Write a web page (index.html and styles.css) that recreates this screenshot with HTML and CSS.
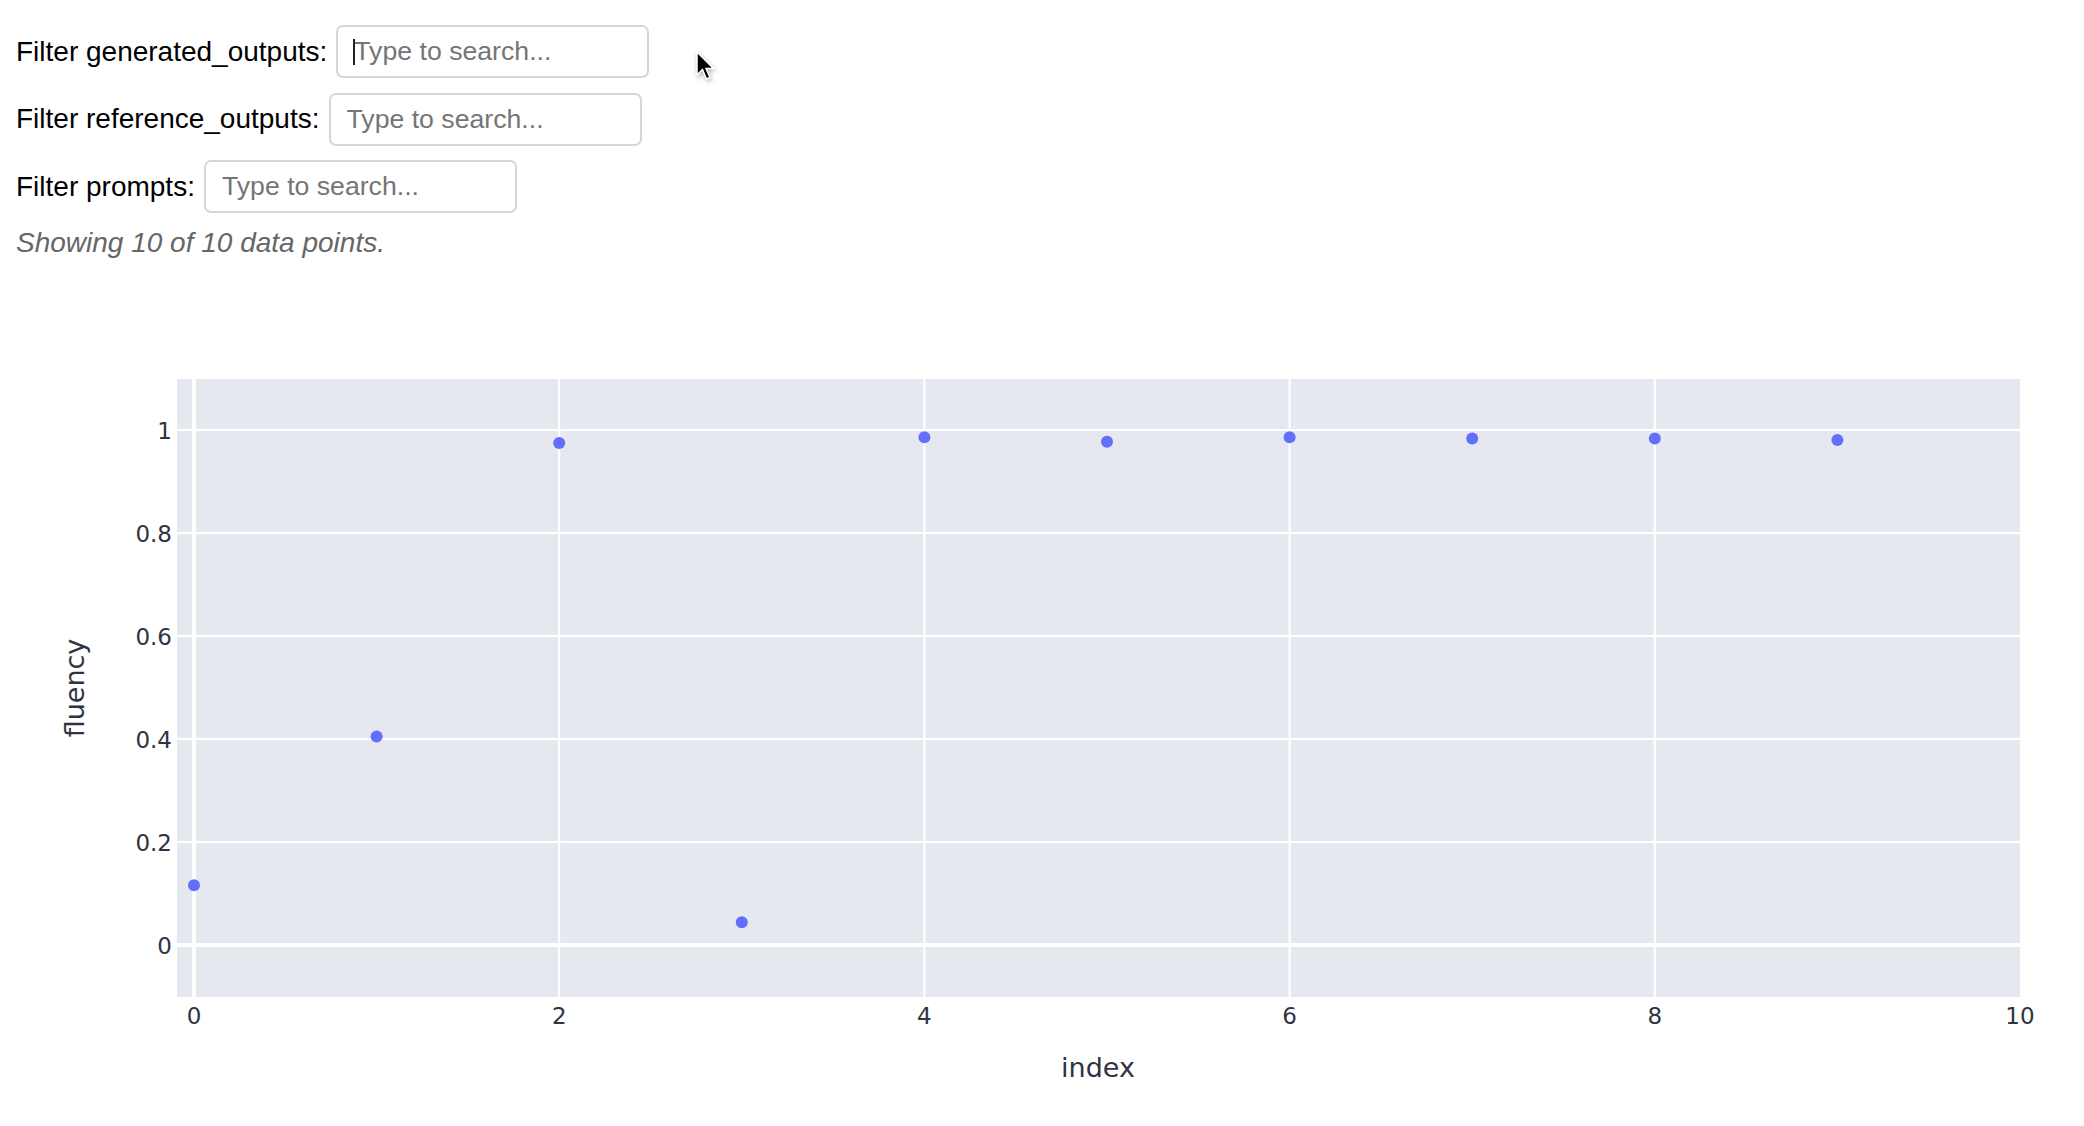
FILE: index.html
```html
<!DOCTYPE html>
<html lang="en">
<head>
    <meta charset="UTF-8">
    <meta name="viewport" content="width=device-width, initial-scale=1.0">
    <title>fluency by index</title>
    <link rel="stylesheet" href="styles.css">
</head>
<body>
    <div class="filters">
        <div class="filter-row">
            <label for="f-gen">Filter generated_outputs:</label>
            <span class="field">
                <input id="f-gen" type="text" placeholder="Type to search...">
                <span class="caret"></span>
            </span>
        </div>
        <div class="filter-row">
            <label for="f-ref">Filter reference_outputs:</label>
            <span class="field"><input id="f-ref" type="text" placeholder="Type to search..."></span>
        </div>
        <div class="filter-row">
            <label for="f-prompt">Filter prompts:</label>
            <span class="field"><input id="f-prompt" type="text" placeholder="Type to search..."></span>
        </div>
        <p class="status">Showing 10 of 10 data points.</p>
    </div>

    <div class="chart">
        <svg width="2084" height="800" viewBox="0 300 2084 800">
            <!-- plot area -->
            <rect class="plot-bg" x="177" y="379" width="1843" height="618"></rect>

            <!-- grid -->
            <g class="grid">
                <line x1="559.2" y1="379" x2="559.2" y2="997"></line>
                <line x1="924.4" y1="379" x2="924.4" y2="997"></line>
                <line x1="1289.6" y1="379" x2="1289.6" y2="997"></line>
                <line x1="1654.8" y1="379" x2="1654.8" y2="997"></line>
                <line x1="177" y1="842" x2="2020" y2="842"></line>
                <line x1="177" y1="739" x2="2020" y2="739"></line>
                <line x1="177" y1="636" x2="2020" y2="636"></line>
                <line x1="177" y1="533" x2="2020" y2="533"></line>
                <line x1="177" y1="430" x2="2020" y2="430"></line>
            </g>
            <g class="zero">
                <line x1="194" y1="379" x2="194" y2="997"></line>
                <line x1="177" y1="945" x2="2020" y2="945"></line>
            </g>

            <!-- points -->
            <g class="points">
                <circle cx="194" cy="885.3" r="6"></circle>
                <circle cx="376.6" cy="736.4" r="6"></circle>
                <circle cx="559.2" cy="442.9" r="6"></circle>
                <circle cx="741.8" cy="922.3" r="6"></circle>
                <circle cx="924.4" cy="437.2" r="6"></circle>
                <circle cx="1107" cy="441.8" r="6"></circle>
                <circle cx="1289.6" cy="437.2" r="6"></circle>
                <circle cx="1472.2" cy="438.5" r="6"></circle>
                <circle cx="1654.8" cy="438.5" r="6"></circle>
                <circle cx="1837.4" cy="440" r="6"></circle>
            </g>

            <!-- y ticks -->
            <g class="ytick">
                <text x="172" y="439">1</text>
                <text x="172" y="542">0.8</text>
                <text x="172" y="645">0.6</text>
                <text x="172" y="748">0.4</text>
                <text x="172" y="851">0.2</text>
                <text x="172" y="954">0</text>
            </g>

            <!-- x ticks -->
            <g class="xtick">
                <text x="194" y="1024">0</text>
                <text x="559.2" y="1024">2</text>
                <text x="924.4" y="1024">4</text>
                <text x="1289.6" y="1024">6</text>
                <text x="1654.8" y="1024">8</text>
                <text x="2020" y="1024">10</text>
            </g>

            <text class="axis-title" x="1098" y="1077">index</text>
            <text class="axis-title" x="84" y="688" transform="rotate(-90 84 688)">fluency</text>
        </svg>
    </div>

    <div class="cursor">
        <svg width="22" height="32" viewBox="0 0 22 32">
            <path d="M1 1 L1 24 L6.5 18.5 L10.5 28 L14 26.5 L10 17.5 L17.5 17.5 Z" fill="#000" stroke="#fff" stroke-width="1.5"></path>
        </svg>
    </div>
</body>
</html>
```

FILE: styles.css
```css
body { margin: 0; background: #fff; font-family: "Liberation Sans", Arial, sans-serif; color: #000; }
.filters { padding: 25px 16px 0 16px; display: flex; flex-direction: column; gap: 14.5px; }
.filter-row { display: flex; align-items: center; gap: 9px; height: 53px; }
.filter-row label { font-size: 28px; line-height: 32px; }
.field { position: relative; display: block; }
.field input { box-sizing: border-box; width: 313px; height: 53px; padding: 0 16px; border: 2px solid #d6d6d6; border-radius: 7px; font-family: "Liberation Sans", Arial, sans-serif; font-size: 26.67px; color: #000; outline: none; background: #fff; }
.field input::placeholder { color: #757575; }
.caret { position: absolute; left: 17px; top: 14px; width: 2px; height: 26px; background: #222; }
.status { margin: 0; font-size: 28px; line-height: 30px; font-style: italic; color: #666; }
.chart { margin-top: 42px; }
.chart svg { display: block; }
.plot-bg { fill: #e5e8ee; }
.grid line { stroke: #fff; stroke-width: 2; }
.zero line { stroke: #fff; stroke-width: 4; }
.points circle { fill: #636efa; }
.ytick text { font-family: "DejaVu Sans", Verdana, sans-serif; font-size: 23px; fill: #2f3440; text-anchor: end; }
.xtick text { font-family: "DejaVu Sans", Verdana, sans-serif; font-size: 23px; fill: #2f3440; text-anchor: middle; }
.axis-title { font-family: "DejaVu Sans", Verdana, sans-serif; font-size: 27px; fill: #2f3440; text-anchor: middle; }
.cursor { position: absolute; left: 696px; top: 51px; filter: drop-shadow(1px 2px 2px rgba(0,0,0,0.3)); }
```
